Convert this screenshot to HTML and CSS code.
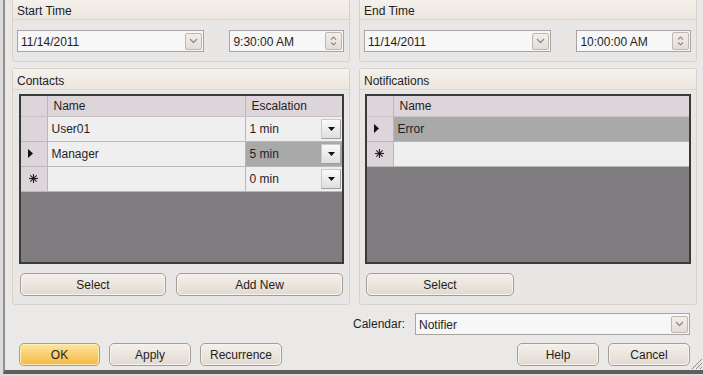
FILE: index.html
```html
<!DOCTYPE html>
<html lang="en">
<head>
    <meta charset="UTF-8">
    <title>Appointment</title>
    <link rel="stylesheet" href="styles.css">
</head>
<body>
    <div class="window">
        <div class="panes">
            <section class="group time-group">
                <div class="group-title">Start Time</div>
                <div class="group-body datetime">
                    <div class="combo date-box">
                        <span class="combo-text">11/14/2011</span>
                        <span class="drop-btn"><svg width="9" height="6" viewBox="0 0 9 6"><path d="M1 1 L4.5 4.5 L8 1" fill="none" stroke="#8c8c8c" stroke-width="1.3"/></svg></span>
                    </div>
                    <div class="combo time-box">
                        <span class="combo-text">9:30:00 AM</span>
                        <span class="spin">
                            <svg width="7" height="4" viewBox="0 0 7 4"><path d="M1 3.5 L3.5 1 L6 3.5" fill="none" stroke="#8c8c8c" stroke-width="1.1"/></svg>
                            <svg width="7" height="4" viewBox="0 0 7 4"><path d="M1 0.5 L3.5 3 L6 0.5" fill="none" stroke="#8c8c8c" stroke-width="1.1"/></svg>
                        </span>
                    </div>
                </div>
            </section>

            <section class="group time-group">
                <div class="group-title">End Time</div>
                <div class="group-body datetime">
                    <div class="combo date-box">
                        <span class="combo-text">11/14/2011</span>
                        <span class="drop-btn"><svg width="9" height="6" viewBox="0 0 9 6"><path d="M1 1 L4.5 4.5 L8 1" fill="none" stroke="#8c8c8c" stroke-width="1.3"/></svg></span>
                    </div>
                    <div class="combo time-box">
                        <span class="combo-text">10:00:00 AM</span>
                        <span class="spin">
                            <svg width="7" height="4" viewBox="0 0 7 4"><path d="M1 3.5 L3.5 1 L6 3.5" fill="none" stroke="#8c8c8c" stroke-width="1.1"/></svg>
                            <svg width="7" height="4" viewBox="0 0 7 4"><path d="M1 0.5 L3.5 3 L6 0.5" fill="none" stroke="#8c8c8c" stroke-width="1.1"/></svg>
                        </span>
                    </div>
                </div>
            </section>

            <section class="group list-group">
                <div class="group-title">Contacts</div>
                <div class="group-body">
                    <div class="grid">
                        <table>
                            <tr class="head">
                                <td class="row-head"></td>
                                <td class="col-name">Name</td>
                                <td class="col-esc">Escalation</td>
                            </tr>
                            <tr>
                                <td class="row-head"></td>
                                <td>User01</td>
                                <td><div class="cell-combo"><span>1 min</span><span class="cell-btn"><svg width="7" height="4" viewBox="0 0 7 4"><path d="M0 0 H7 L3.5 4 Z" fill="#111"/></svg></span></div></td>
                            </tr>
                            <tr>
                                <td class="row-head"><svg class="arrow" width="5" height="9" viewBox="0 0 5 9"><path d="M0 0 L5 4.5 L0 9 Z" fill="#111"/></svg></td>
                                <td>Manager</td>
                                <td class="current"><div class="cell-combo"><span>5 min</span><span class="cell-btn"><svg width="7" height="4" viewBox="0 0 7 4"><path d="M0 0 H7 L3.5 4 Z" fill="#111"/></svg></span></div></td>
                            </tr>
                            <tr>
                                <td class="row-head"><svg width="11" height="11" viewBox="0 0 11 11"><g stroke="#222" stroke-width="1.1"><path d="M5.5 1 V10"/><path d="M1 5.5 H10"/><path d="M2.3 2.3 L8.7 8.7"/><path d="M8.7 2.3 L2.3 8.7"/></g></svg></td>
                                <td></td>
                                <td><div class="cell-combo"><span>0 min</span><span class="cell-btn"><svg width="7" height="4" viewBox="0 0 7 4"><path d="M0 0 H7 L3.5 4 Z" fill="#111"/></svg></span></div></td>
                            </tr>
                        </table>
                    </div>
                    <div class="group-buttons">
                        <button class="btn select-btn">Select</button>
                        <button class="btn add-btn">Add New</button>
                    </div>
                </div>
            </section>

            <section class="group list-group notify-group">
                <div class="group-title">Notifications</div>
                <div class="group-body">
                    <div class="grid">
                        <table>
                            <tr class="head">
                                <td class="row-head"></td>
                                <td class="col-name">Name</td>
                            </tr>
                            <tr class="selected">
                                <td class="row-head"><svg class="arrow" width="5" height="9" viewBox="0 0 5 9"><path d="M0 0 L5 4.5 L0 9 Z" fill="#111"/></svg></td>
                                <td>Error</td>
                            </tr>
                            <tr>
                                <td class="row-head"><svg width="11" height="11" viewBox="0 0 11 11"><g stroke="#222" stroke-width="1.1"><path d="M5.5 1 V10"/><path d="M1 5.5 H10"/><path d="M2.3 2.3 L8.7 8.7"/><path d="M8.7 2.3 L2.3 8.7"/></g></svg></td>
                                <td></td>
                            </tr>
                        </table>
                    </div>
                    <div class="group-buttons">
                        <button class="btn notify-select">Select</button>
                    </div>
                </div>
            </section>
        </div>

        <div class="calendar-row">
            <label class="calendar-label">Calendar:</label>
            <div class="combo calendar-box">
                <span class="combo-text">Notifier</span>
                <span class="drop-btn"><svg width="9" height="6" viewBox="0 0 9 6"><path d="M1 1 L4.5 4.5 L8 1" fill="none" stroke="#8c8c8c" stroke-width="1.3"/></svg></span>
            </div>
        </div>

        <div class="button-row">
            <div class="btn-set">
                <button class="btn ok-btn">OK</button>
                <button class="btn">Apply</button>
                <button class="btn">Recurrence</button>
            </div>
            <div class="btn-set">
                <button class="btn">Help</button>
                <button class="btn">Cancel</button>
            </div>
        </div>

        <svg class="grip" width="12" height="12" viewBox="0 0 12 12">
            <g stroke="#8a8a8a" stroke-width="1">
                <path d="M12 2 L2 12"/>
                <path d="M12 6 L6 12"/>
                <path d="M12 10 L10 12"/>
            </g>
        </svg>
    </div>
</body>
</html>
```

FILE: styles.css
```css
html, body {
    margin: 0;
    padding: 0;
}

body {
    width: 703px;
    height: 376px;
    overflow: hidden;
    background: #dcdcdc;
    font-family: 'Liberation Sans', Arial, sans-serif;
    font-size: 12px;
    color: #1e1e1e;
}

.window {
    position: relative;
    box-sizing: border-box;
    height: 376px;
    margin-left: 3px;
    border-left: 2px solid #8f8f8f;
    border-bottom: 4px solid #5e5e5e;
    padding: 0 6px 0 7px;
    background: #ebe9e8;
}

.panes {
    display: grid;
    grid-template-columns: 338px 338px;
    grid-template-rows: 64px 237px;
    column-gap: 9px;
    row-gap: 6px;
    margin-top: -2px;
}

.group {
    box-sizing: border-box;
    border: 1px solid #d7d1ca;
    border-radius: 3px;
    background: #e9e7e6;
    display: flex;
    flex-direction: column;
}

.group-title {
    box-sizing: border-box;
    height: 21px;
    padding: 5px 0 0 4px;
    line-height: 14px;
    background: linear-gradient(#f5f1ec, #ede6de);
    border-bottom: 1px solid #ddd6ce;
    color: #222;
}

.group-body {
    flex: 1;
    display: flex;
    flex-direction: column;
}

.datetime {
    flex-direction: row;
    align-items: flex-start;
    padding: 10px 5px 0 4px;
    gap: 25px;
}

.combo {
    box-sizing: border-box;
    height: 22px;
    display: flex;
    align-items: center;
    justify-content: space-between;
    border: 1px solid #a7a4a2;
    background: #f7f7f7;
    padding: 0 1px 0 3px;
}

.date-box {
    width: 188px;
}

.time-box {
    width: 115px;
}

.combo-text {
    line-height: 14px;
    padding-top: 1px;
}

.drop-btn {
    box-sizing: border-box;
    width: 17px;
    height: 17px;
    border: 1px solid #c0b6ab;
    border-radius: 2px;
    background: linear-gradient(#f2eeea, #e4ddd6);
    display: flex;
    align-items: center;
    justify-content: center;
}

.spin {
    box-sizing: border-box;
    width: 17px;
    height: 18px;
    border: 1px solid #c0b6ab;
    border-radius: 2px;
    background: linear-gradient(#f2eeea, #e4ddd6);
    display: flex;
    flex-direction: column;
    align-items: center;
    justify-content: space-evenly;
}

.list-group .group-body {
    padding: 4px 5px 0 6px;
}

.notify-group .group-body {
    padding-left: 5px;
}

.grid {
    box-sizing: border-box;
    height: 170px;
    border: 2px solid #3a3a3a;
    background: #807d81;
}

.grid table {
    width: 100%;
    border-collapse: collapse;
    table-layout: fixed;
}

.grid td {
    box-sizing: border-box;
    height: 25px;
    padding: 0 4px;
    background: #efefef;
    border: 1px solid #bab6b9;
    white-space: nowrap;
}

.grid tr:first-child td {
    border-top: none;
}

.grid td:first-child {
    border-left: none;
}

.grid td:last-child {
    border-right: none;
}

.grid .head td {
    height: 20px;
    background: #dcd6da;
    border-bottom-color: #c7c1c5;
}

.grid .head .col-name,
.grid .head .col-esc {
    padding-left: 6px;
}

.grid .row-head {
    width: 26px;
    padding: 0;
    background: #dcd6da;
    text-align: center;
    vertical-align: middle;
}

.grid .row-head svg {
    display: block;
    margin: 0 auto;
}

.grid .row-head .arrow {
    margin-left: 7px;
}

.grid .col-esc {
    width: 97px;
}

.grid td.current,
.grid .selected td {
    background: #a9a9a9;
}

.grid .selected .row-head {
    background: #dcd6da;
}

.cell-combo {
    display: flex;
    align-items: center;
    justify-content: space-between;
    margin-right: -3px;
}

.cell-btn {
    box-sizing: border-box;
    width: 20px;
    height: 20px;
    border: 1px solid #c9c9c9;
    border-right-color: #9d9d9d;
    border-bottom-color: #9d9d9d;
    background: linear-gradient(#fafafa, #dedede);
    display: flex;
    align-items: center;
    justify-content: center;
}

.group-buttons {
    display: flex;
    gap: 10px;
    margin-top: 9px;
    padding-left: 1px;
}

.btn {
    box-sizing: border-box;
    height: 23px;
    width: 82px;
    padding: 0;
    border: 1px solid #a69c92;
    border-radius: 5px;
    background: linear-gradient(#f4f0eb, #e2dad1);
    box-shadow: inset 0 0 0 1px #f7f4f0;
    font-family: 'Liberation Sans', Arial, sans-serif;
    font-size: 12px;
    color: #1e1e1e;
}

.select-btn {
    width: 146px;
}

.add-btn {
    width: 167px;
}

.notify-select {
    width: 148px;
}

.calendar-row {
    display: flex;
    justify-content: flex-end;
    align-items: center;
    gap: 10px;
    margin-top: 8px;
    padding-right: 7px;
}

.calendar-box {
    width: 275px;
}

.button-row {
    display: flex;
    justify-content: space-between;
    margin-top: 8px;
    padding: 0 7px;
}

.btn-set {
    display: flex;
    gap: 9px;
}

.ok-btn {
    width: 81px;
    border-color: #c79a44;
    background: linear-gradient(#fde79e, #f6b744);
    box-shadow: inset 0 0 0 1px #feeebb;
}

.grip {
    position: absolute;
    right: 1px;
    bottom: 1px;
}
```
